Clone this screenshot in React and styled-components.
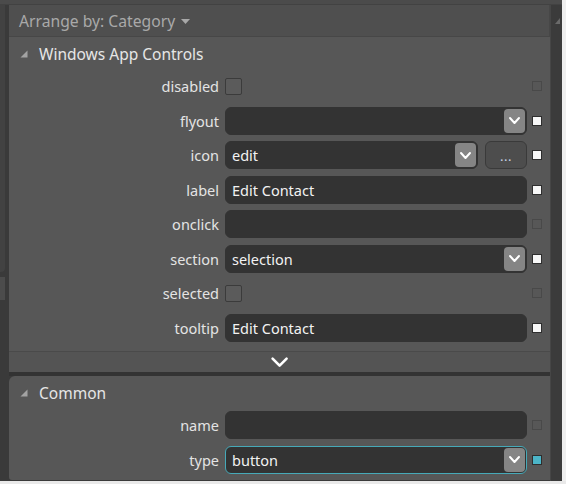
import React from "react";
import styled, { createGlobalStyle } from "styled-components";

const GlobalStyle = createGlobalStyle`
  html, body {
    margin: 0;
    padding: 0;
    background: #3c3c3c;
  }
  body {
    font-family: "Noto Sans", "Open Sans", sans-serif;
  }
`;

const windowsRows = [
  { label: "disabled", kind: "check", marker: "unset" },
  { label: "flyout", kind: "select", value: "", marker: "set" },
  { label: "icon", kind: "icon", value: "edit", marker: "set" },
  { label: "label", kind: "text", value: "Edit Contact", marker: "set" },
  { label: "onclick", kind: "text", value: "", marker: "unset" },
  { label: "section", kind: "select", value: "selection", marker: "set" },
  { label: "selected", kind: "check", marker: "unset" },
  { label: "tooltip", kind: "text", value: "Edit Contact", marker: "set" },
];

const commonRows = [
  { label: "name", kind: "text", value: "", marker: "unset" },
  { label: "type", kind: "select", value: "button", marker: "accent", focused: true },
];

const ChevronDown = ({ w = 9, h = 5, stroke = 2 }) => (
  <svg width={w + stroke * 2} height={h + stroke * 2} viewBox={`0 0 ${w + stroke * 2} ${h + stroke * 2}`}>
    <polyline
      points={`${stroke},${stroke} ${stroke + w / 2},${stroke + h} ${stroke + w},${stroke}`}
      fill="none"
      stroke="#ffffff"
      strokeWidth={stroke}
      strokeLinecap="round"
      strokeLinejoin="round"
    />
  </svg>
);

const CornerTriangle = () => (
  <svg width="8" height="8" viewBox="0 0 8 8">
    <polygon points="7.5,0.5 7.5,7.5 0.5,7.5" fill="#a3a3a3" />
  </svg>
);

const Control = ({ row }) => {
  if (row.kind === "check") {
    return <CheckBox />;
  }
  if (row.kind === "icon") {
    return (
      <ControlRow>
        <Field>
          <FieldText>{row.value}</FieldText>
          <DropButton>
            <ChevronDown />
          </DropButton>
        </Field>
        <EllipsisButton>...</EllipsisButton>
      </ControlRow>
    );
  }
  return (
    <Field focused={row.focused}>
      <FieldText>{row.value}</FieldText>
      {row.kind === "select" && (
        <DropButton>
          <ChevronDown />
        </DropButton>
      )}
    </Field>
  );
};

const PropertyRow = ({ row }) => (
  <Row>
    <Label>{row.label}</Label>
    <ControlCell>
      <Control row={row} />
    </ControlCell>
    <Marker variant={row.marker} />
  </Row>
);

const App = () => {
  return (
    <>
      <GlobalStyle />
      <Shell>
        <Upper>
          <Content>
            <TopStrip />
            <Body>
              <Gutter>
                <GutterPane />
                <GutterTab />
              </Gutter>
              <Main>
                <Toolbar>
                  Arrange by: Category
                  <Caret>
                    <svg width="9" height="5" viewBox="0 0 9 5">
                      <polygon points="0,0 9,0 4.5,5" fill="#a8a8a8" />
                    </svg>
                  </Caret>
                </Toolbar>
                <Section>
                  <SectionHeader>
                    <CornerTriangle />
                    <span>Windows App Controls</span>
                  </SectionHeader>
                  {windowsRows.map((row) => (
                    <PropertyRow key={row.label} row={row} />
                  ))}
                  <ExpandBar>
                    <ChevronDown w={14} h={7} stroke={2.6} />
                  </ExpandBar>
                </Section>
                <Divider />
                <Section rounded>
                  <SectionHeader>
                    <CornerTriangle />
                    <span>Common</span>
                  </SectionHeader>
                  {commonRows.map((row) => (
                    <PropertyRow key={row.label} row={row} />
                  ))}
                </Section>
              </Main>
              <Scrollbar>
                <svg width="5" height="6" viewBox="0 0 5 6">
                  <polygon points="5,0 5,6 0,6" fill="#6a6a6a" />
                </svg>
              </Scrollbar>
            </Body>
          </Content>
          <RightEdge />
        </Upper>
        <BottomEdge />
      </Shell>
    </>
  );
};

export default App;

const Shell = styled.div`
  width: 566px;
  height: 484px;
  display: flex;
  flex-direction: column;
  overflow: hidden;
`;

const Upper = styled.div`
  display: flex;
  height: 481px;
`;

const Content = styled.div`
  flex: 1;
  display: flex;
  flex-direction: column;
`;

const TopStrip = styled.div`
  height: 5px;
  background: #4b4b4b;
  border-bottom: 1px solid #424242;
  box-sizing: border-box;
`;

const Body = styled.div`
  flex: 1;
  display: flex;
`;

const Gutter = styled.div`
  width: 9px;
  background: #3a3a3a;
  display: flex;
  flex-direction: column;
  gap: 5px;
`;

const GutterPane = styled.div`
  width: 5px;
  height: 267px;
  background: #424242;
  border-bottom-right-radius: 4px;
`;

const GutterTab = styled.div`
  width: 5px;
  height: 23px;
  background: #4c4c4c;
`;

const Main = styled.div`
  width: 541px;
  display: flex;
  flex-direction: column;
  background: #3a3a3a;
`;

const Toolbar = styled.div`
  height: 32px;
  box-sizing: border-box;
  display: flex;
  align-items: center;
  padding-left: 10px;
  background: #4f4f4f;
  border-bottom: 1px solid #474747;
  border-right: 1px solid #474747;
  color: #a9a9a9;
  font-size: 15.7px;
`;

const Caret = styled.span`
  display: inline-flex;
  margin-left: 6px;
  margin-top: 1px;
`;

const Section = styled.div`
  background: #575757;
  display: flex;
  flex-direction: column;
  border-top-left-radius: ${({ rounded }) => (rounded ? "6px" : "0")};
  border-bottom-left-radius: ${({ rounded }) => (rounded ? "3px" : "0")};
  height: ${({ rounded }) => (rounded ? "104px" : "335px")};
  box-sizing: border-box;
`;

const SectionHeader = styled.div`
  height: 32px;
  flex-shrink: 0;
  display: flex;
  align-items: center;
  gap: 11px;
  padding-left: 11px;
  padding-top: 1px;
  box-sizing: border-box;
  color: #e6e6e6;
  font-size: 15.5px;
`;

const Row = styled.div`
  height: 34.5px;
  flex-shrink: 0;
  display: flex;
  align-items: center;
`;

const Label = styled.div`
  width: 216px;
  padding-right: 6px;
  box-sizing: border-box;
  text-align: right;
  color: #e4e4e4;
  font-size: 14.5px;
`;

const ControlCell = styled.div`
  width: 302px;
  display: flex;
  align-items: center;
`;

const ControlRow = styled.div`
  width: 100%;
  display: flex;
  gap: 7px;
`;

const Field = styled.div`
  flex: 1;
  width: 100%;
  height: 28px;
  box-sizing: border-box;
  display: flex;
  align-items: center;
  background: #333333;
  border-radius: 6px;
  border: ${({ focused }) => (focused ? "1.5px solid #46a9b8" : "1px solid #333333")};
  padding-left: 6px;
  padding-right: ${({ focused }) => (focused ? "1px" : "1.5px")};
`;

const FieldText = styled.span`
  flex: 1;
  color: #f2f2f2;
  font-size: 14.5px;
  white-space: nowrap;
`;

const DropButton = styled.div`
  width: 21px;
  height: 24px;
  border-radius: 4px;
  background: #858585;
  display: flex;
  align-items: center;
  justify-content: center;
`;

const EllipsisButton = styled.div`
  width: 42px;
  height: 28px;
  box-sizing: border-box;
  border: 1px solid #3a3a3a;
  border-radius: 6px;
  background: #4d4d4d;
  color: #c9d2e6;
  font-size: 13px;
  display: flex;
  justify-content: center;
  align-items: flex-end;
  padding-bottom: 3px;
  letter-spacing: 0.5px;
`;

const CheckBox = styled.div`
  width: 17px;
  height: 17px;
  box-sizing: border-box;
  border: 1px solid #3b3b3b;
  border-radius: 2px;
  background: #5b5b5b;
`;

const markerColors = {
  set: { bg: "#f7f7f7", border: "#2e2e2e" },
  unset: { bg: "transparent", border: "#494949" },
  accent: { bg: "#4bb4c7", border: "#2e2e2e" },
};

const Marker = styled.div`
  width: 10px;
  height: 10px;
  box-sizing: border-box;
  margin-left: 5px;
  background: ${({ variant }) => markerColors[variant].bg};
  border: 1px solid ${({ variant }) => markerColors[variant].border};
`;

const ExpandBar = styled.div`
  margin-top: 6px;
  height: 21px;
  box-sizing: border-box;
  border-top: 1px solid #4a4a4a;
  background: #545454;
  display: flex;
  justify-content: center;
  align-items: center;
`;

const Divider = styled.div`
  height: 4px;
  background: #333333;
`;

const Scrollbar = styled.div`
  width: 12px;
  background: #3b3b3b;
  border-left: 1px solid #464646;
  box-sizing: border-box;
  display: flex;
  justify-content: flex-end;
  padding-top: 13px;
  padding-right: 2px;
  align-items: flex-start;
`;

const RightEdge = styled.div`
  width: 4px;
  background: #efefef;
`;

const BottomEdge = styled.div`
  height: 3px;
  background: #e9e9e9;
`;
